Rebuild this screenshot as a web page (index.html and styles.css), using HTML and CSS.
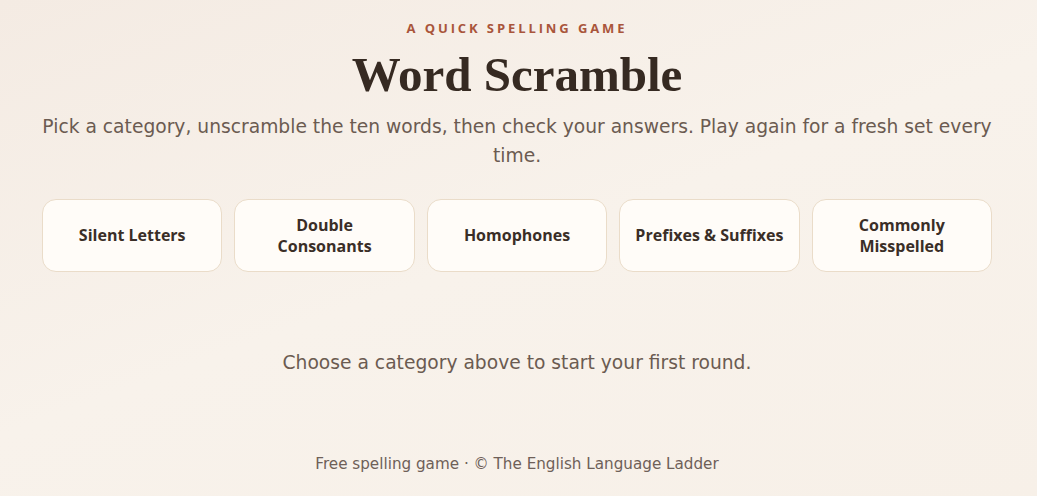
FILE: index.html
```html
<!DOCTYPE html>
<html lang="en">

<head>
    <meta charset="UTF-8">
    <meta name="viewport" content="width=device-width, initial-scale=1.0">
    <title>Word Scramble</title>
    <link rel="stylesheet" href="styles.css">
</head>

<body>

    <div class="container">
        <div class="header">
            <p class="eyebrow">A Quick Spelling Game</p>
            <h1 class="title">Word Scramble</h1>
            <p class="intro">Pick a category, unscramble the ten words, then check your answers. Play again for a fresh set every time.</p>
        </div>

        <div class="categories">
            <button class="category">Silent Letters</button>
            <button class="category">Double Consonants</button>
            <button class="category">Homophones</button>
            <button class="category">Prefixes &amp; Suffixes</button>
            <button class="category">Commonly Misspelled</button>
        </div>

        <div class="game" id="game">
            <p class="empty">Choose a category above to start your first round.</p>
        </div>

        <div class="footer">
            <p>Free spelling game · © The English Language Ladder</p>
        </div>
    </div>

</body>

</html>
```

FILE: styles.css
```css
* {
    margin: 0;
    padding: 0;
    box-sizing: border-box;
}

html,
body {
    height: 100%;
}

body {
    font-family: "DejaVu Sans", "Open Sans", sans-serif;
    color: #6b5b51;
    background: linear-gradient(160deg, #f4ebe3 0%, #f8f2eb 50%, #f7f0e8 100%);
}

.container {
    padding: 19px 45px 0 42px;
}

.header {
    text-align: center;
}

.eyebrow {
    font-family: "Open Sans", sans-serif;
    font-size: 13px;
    font-weight: 700;
    letter-spacing: 2.9px;
    text-transform: uppercase;
    color: #a9553b;
    line-height: 18px;
}

.title {
    font-family: "Liberation Serif", "DejaVu Serif", serif;
    font-size: 49px;
    font-weight: 700;
    color: #362a22;
    line-height: 60px;
    margin-top: 8px;
}

.intro {
    font-size: 18.7px;
    line-height: 29px;
    margin-top: 7px;
}

.categories {
    display: grid;
    grid-template-columns: repeat(5, 1fr);
    gap: 12px;
    margin-top: 29px;
}

.category {
    height: 73px;
    padding: 0 13px;
    background-color: #fffcf8;
    border: 1px solid #eadcc9;
    border-radius: 14px;
    font-family: "Open Sans", sans-serif;
    font-size: 16px;
    font-weight: 700;
    line-height: 21px;
    color: #3a2e27;
    cursor: pointer;
}

.game {
    padding: 78px 0 0;
    text-align: center;
}

.empty {
    font-size: 18.7px;
    line-height: 26px;
}

.footer {
    margin-top: 79px;
    text-align: center;
    font-size: 15.2px;
    color: #6e6058;
}
```
